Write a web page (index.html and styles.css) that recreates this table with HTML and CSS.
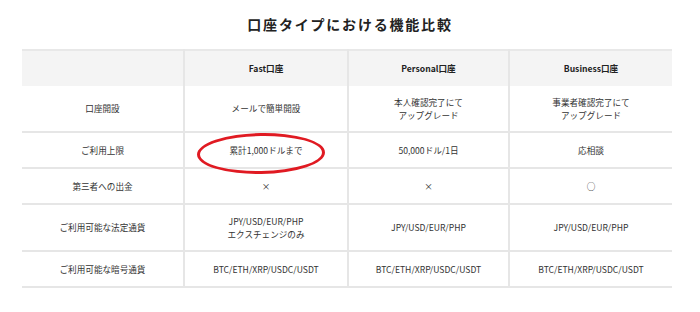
FILE: index.html
```html
<!DOCTYPE html>
<html lang="ja">
<head>
<meta charset="utf-8">
<link rel="stylesheet" href="styles.css">
</head>
<body>
<h1 class="title">口座タイプにおける機能比較</h1>
<table class="cmp">
  <colgroup>
    <col class="c1"><col class="c2"><col class="c3"><col class="c4">
  </colgroup>
  <thead>
    <tr class="head">
      <th></th>
      <th>Fast口座</th>
      <th>Personal口座</th>
      <th>Business口座</th>
    </tr>
  </thead>
  <tbody>
    <tr class="tall">
      <td>口座開設</td>
      <td>メールで簡単開設</td>
      <td>本人確認完了にて<br>アップグレード</td>
      <td>事業者確認完了にて<br>アップグレード</td>
    </tr>
    <tr>
      <td>ご利用上限</td>
      <td class="marked">累計1,000ドルまで<span class="ring"></span></td>
      <td>50,000ドル/1日</td>
      <td>応相談</td>
    </tr>
    <tr>
      <td>第三者への出金</td>
      <td>×</td>
      <td>×</td>
      <td>○</td>
    </tr>
    <tr class="tall">
      <td>ご利用可能な法定通貨</td>
      <td>JPY/USD/EUR/PHP<br>エクスチェンジのみ</td>
      <td>JPY/USD/EUR/PHP</td>
      <td>JPY/USD/EUR/PHP</td>
    </tr>
    <tr>
      <td>ご利用可能な暗号通貨</td>
      <td>BTC/ETH/XRP/USDC/USDT</td>
      <td>BTC/ETH/XRP/USDC/USDT</td>
      <td>BTC/ETH/XRP/USDC/USDT</td>
    </tr>
  </tbody>
</table>
</body>
</html>
```
FILE: styles.css
```css
html, body {
  margin: 0;
  padding: 0;
  background: #fff;
}
body {
  width: 700px;
  height: 312px;
  overflow: hidden;
  font-family: "Noto Sans CJK JP", "Noto Sans", sans-serif;
  color: #333;
}
.title {
  margin: 0;
  padding-top: 14px;
  padding-left: 0;
  height: 39px;
  box-sizing: border-box;
  font-size: 14px;
  line-height: 20px;
  font-weight: 700;
  letter-spacing: 1.8px;
  text-align: center;
  color: #222;
}
.cmp {
  margin-left: 22px;
  margin-top: 10px;
  width: 650px;
  border-collapse: collapse;
  table-layout: fixed;
  font-size: 8.6px;
  line-height: 12.5px;
  border-top: 2px solid #e8e8e8;
}
.c1 { width: 162px; }
.c2 { width: 164px; }
.c3 { width: 161px; }
.c4 { width: 163px; }
.cmp th, .cmp td {
  padding: 0;
  text-align: center;
  vertical-align: middle;
  border-bottom: 2px solid #e6e6e6;
  border-left: 2px solid #e6e6e6;
  height: 36px;
  box-sizing: border-box;
}
.cmp th:first-child, .cmp td:first-child {
  border-left: none;
}
.head th {
  background: #f4f4f4;
  font-weight: 700;
  color: #222;
  border-bottom: none;
  height: 36px;
}
.cmp tbody tr:first-child td {
  height: 46px;
}
.cmp tr.tall td {
  height: 47px;
}
.marked {
  position: relative;
}
.ring {
  position: absolute;
  left: 12px;
  top: 0px;
  width: 128px;
  height: 41px;
  border: 3px solid #e01a22;
  border-radius: 50%;
  box-sizing: border-box;
  transform: rotate(-1deg);
}
```
